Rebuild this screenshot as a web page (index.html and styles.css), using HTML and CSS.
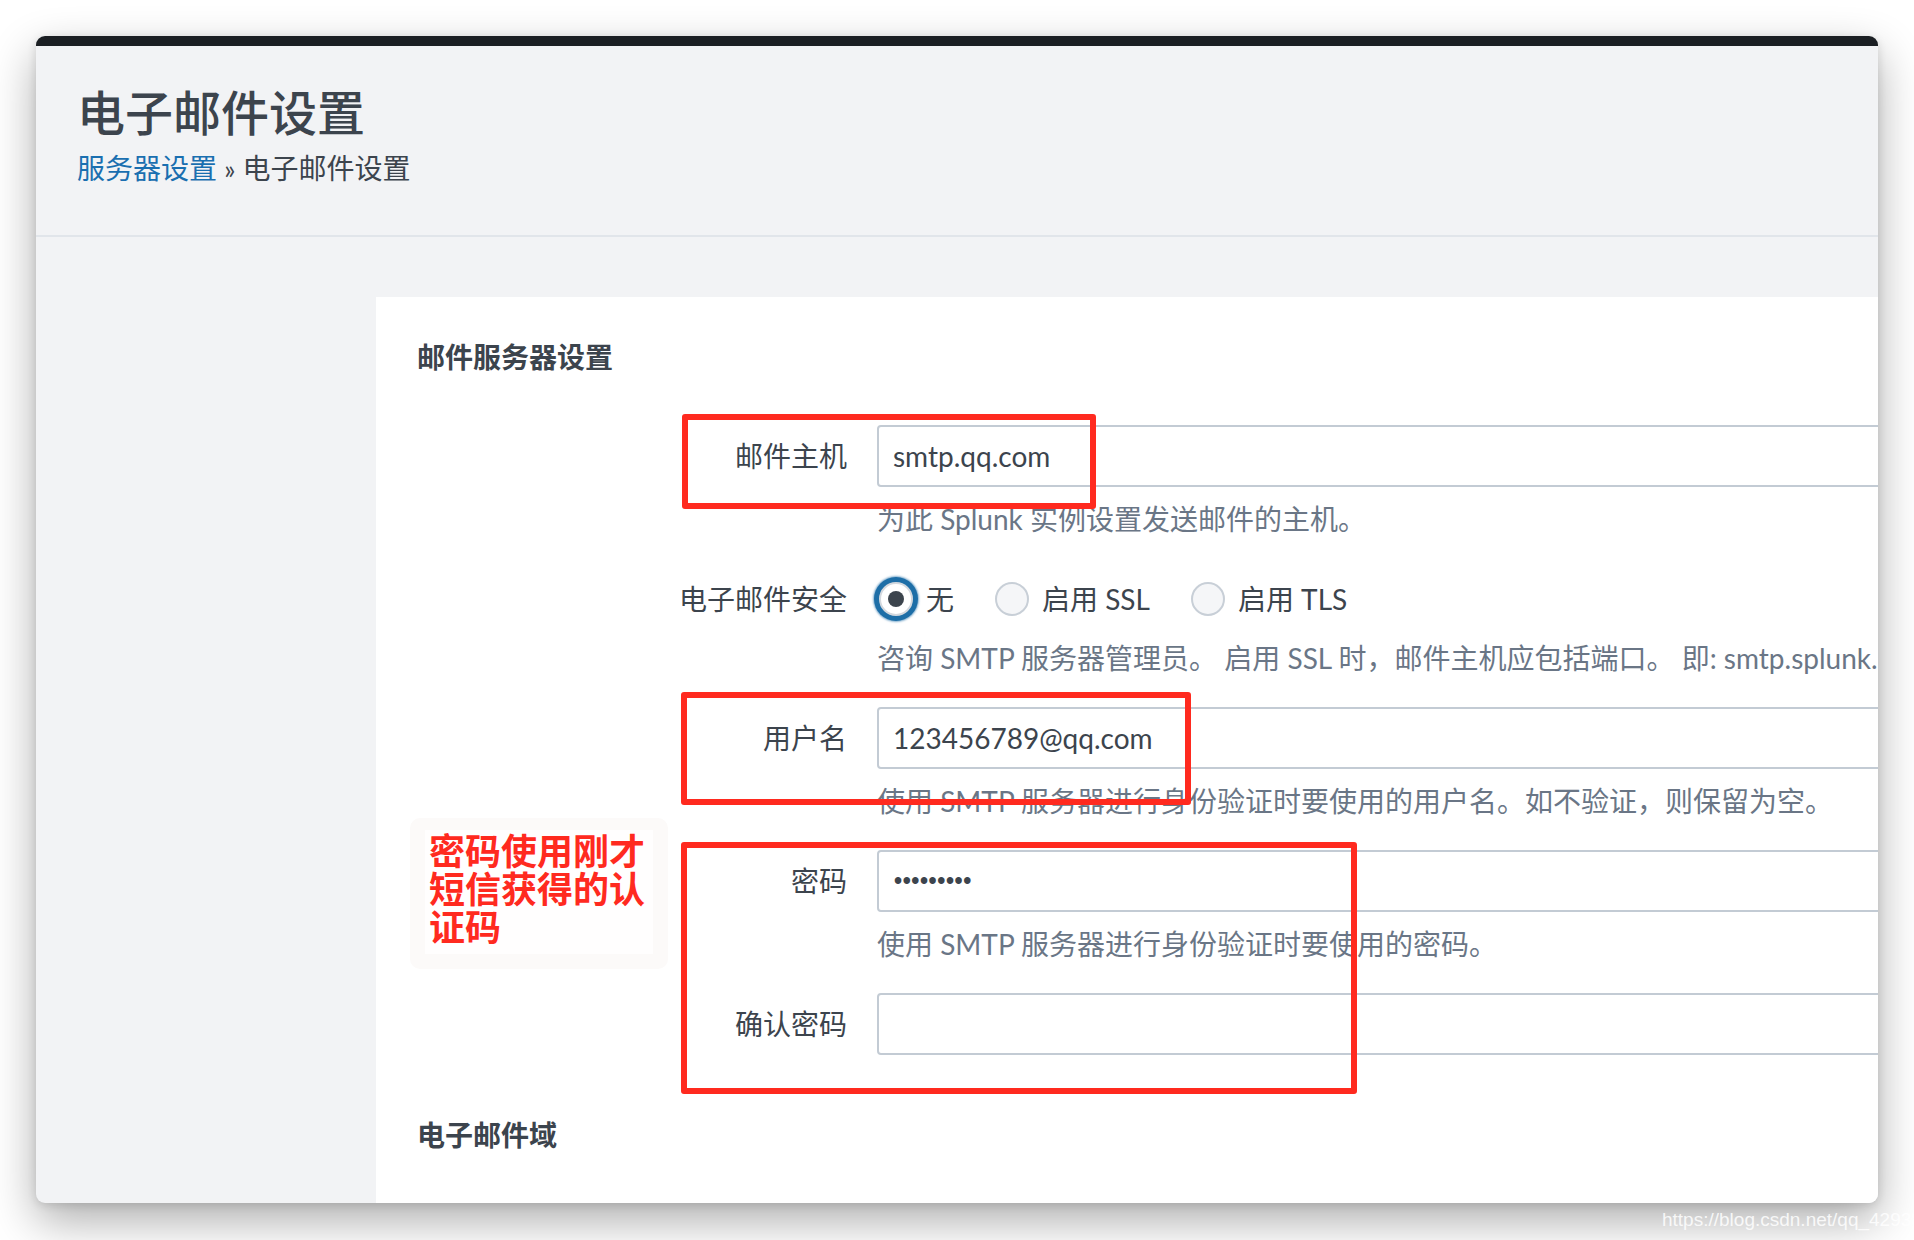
FILE: index.html
```html
<!DOCTYPE html>
<html lang="zh-CN">
<head>
<meta charset="utf-8">
<title>电子邮件设置</title>
<link rel="stylesheet" href="styles.css">
</head>
<body>
<div class="stage">
  <div class="window">
    <div class="titlebar"></div>
    <header class="page-header">
      <h1 class="page-title">电子邮件设置</h1>
      <nav class="breadcrumb"><a href="#" class="crumb-link">服务器设置</a> <span class="crumb-sep">»</span> <span>电子邮件设置</span></nav>
    </header>
    <main class="main">
      <section class="panel">
        <h2 class="section-title">邮件服务器设置</h2>
        <div class="form">
          <div class="field">
            <label class="field-label">邮件主机</label>
            <div class="field-control">
              <input class="text-input" type="text" value="smtp.qq.com">
              <p class="help">为此 Splunk 实例设置发送邮件的主机。</p>
            </div>
          </div>
          <div class="field">
            <label class="field-label">电子邮件安全</label>
            <div class="field-control">
              <div class="radio-group">
                <span class="radio"><span class="radio-dot checked"></span>无</span>
                <span class="radio"><span class="radio-dot"></span>启用 SSL</span>
                <span class="radio"><span class="radio-dot"></span>启用 TLS</span>
              </div>
              <p class="help help-tight">咨询 SMTP 服务器管理员。 启用 SSL 时，邮件主机应包括端口。 即: smtp.splunk.com:465</p>
            </div>
          </div>
          <div class="field">
            <label class="field-label">用户名</label>
            <div class="field-control">
              <input class="text-input" type="text" value="123456789@qq.com">
              <p class="help">使用 SMTP 服务器进行身份验证时要使用的用户名。如不验证，则保留为空。</p>
            </div>
          </div>
          <div class="field">
            <label class="field-label">密码</label>
            <div class="field-control">
              <div class="text-input password">•••••••••</div>
              <p class="help">使用 SMTP 服务器进行身份验证时要使用的密码。</p>
            </div>
          </div>
          <div class="field">
            <label class="field-label">确认密码</label>
            <div class="field-control">
              <input class="text-input" type="password" value="">
            </div>
          </div>
        </div>
        <h2 class="section-title section-second">电子邮件域</h2>
        <div class="form">
          <div class="field">
            <label class="field-label"></label>
            <div class="field-control">
              <input class="text-input" type="text" value="">
            </div>
          </div>
        </div>

        <div class="mark mark-host"></div>
        <div class="mark mark-user"></div>
        <div class="mark mark-pass"></div>
        <div class="note"><div class="note-inner">密码使用刚才<br>短信获得的认<br>证码</div></div>
      </section>
    </main>
  </div>
  <div class="watermark">https://blog.csdn.net/qq_42938491</div>
</div>
</body>
</html>
```

FILE: styles.css
```css
* { box-sizing: border-box; }

html, body {
  margin: 0;
  padding: 0;
  background: #ffffff;
}

body {
  width: 1914px;
  height: 1240px;
  overflow: hidden;
  font-family: Lato, "Noto Sans CJK SC", sans-serif;
  color: #3c444d;
}

.stage {
  position: relative;
  padding: 36px 36px 0 36px;
  height: 1240px;
}

.window {
  height: 1167px;
  border-radius: 9px;
  overflow: hidden;
  background: #f2f3f5;
  display: flex;
  flex-direction: column;
  box-shadow: 0 18px 46px rgba(0, 0, 0, 0.32), 0 2px 10px rgba(0, 0, 0, 0.12);
}

.titlebar {
  height: 10px;
  flex: none;
  background: #1b1f23;
}

.page-header {
  flex: none;
  padding: 39px 41px 48px 41px;
  border-bottom: 2px solid #e1e5ea;
}

.page-title {
  margin: 0;
  font-size: 48px;
  line-height: 56px;
  font-weight: 500;
  color: #3c444d;
}

.breadcrumb {
  margin-top: 9px;
  font-size: 28px;
  line-height: 36px;
  color: #3c444d;
}

.crumb-link {
  color: #1a6fb0;
  text-decoration: none;
}

.crumb-sep {
  font-size: 26px;
}

.main {
  flex: 1;
  display: flex;
  padding: 60px 0 0 340px;
  min-height: 0;
}

.panel {
  position: relative;
  flex: 1;
  background: #ffffff;
  padding: 40px 0 0 41px;
}

.section-title {
  margin: 0;
  font-size: 28px;
  line-height: 40px;
  font-weight: 700;
  color: #3c444d;
}

.section-second {
  margin-top: 60px;
}

.form {
  margin-top: 48px;
  margin-left: 260px;
}

.field {
  display: grid;
  grid-template-columns: 170px 1fr;
  column-gap: 30px;
  margin-bottom: 29px;
}

.field-label {
  font-size: 28px;
  line-height: 62px;
  text-align: right;
  color: #3c444d;
  white-space: nowrap;
}

.field-control {
  min-width: 0;
}

.text-input {
  display: block;
  width: calc(100% + 12px);
  height: 62px;
  margin: 0;
  border: 2px solid #c3cbd4;
  border-radius: 4px;
  padding: 0 14px;
  background: #ffffff;
  font-family: Lato, "Noto Sans CJK SC", sans-serif;
  font-size: 28px;
  color: #3c444d;
  outline: none;
}

.password {
  display: flex;
  align-items: center;
  font-size: 23px;
  letter-spacing: 0.6px;
  padding-left: 15px;
  font-family: "Liberation Sans", sans-serif;
  font-weight: 700;
}

.help {
  margin: 12px 0 0 0;
  font-size: 28px;
  line-height: 40px;
  color: #6a7686;
  white-space: nowrap;
}

.help-tight {
  margin-top: 8px;
}

.radio-group {
  display: flex;
  align-items: center;
  gap: 41px;
  height: 62px;
  padding-left: 2px;
}

.radio {
  display: flex;
  align-items: center;
  gap: 13px;
  font-size: 28px;
  line-height: 40px;
  color: #3c444d;
}

.radio-dot {
  position: relative;
  width: 34px;
  height: 34px;
  border-radius: 50%;
  border: 2px solid #c8cfd7;
  background: #f5f6f8;
  flex: none;
}

.radio-dot.checked {
  background: #ffffff;
  border-color: #d3d8de;
  box-shadow: 0 0 0 5px #1d6ea7, 0 0 2px 6px rgba(29, 110, 167, 0.55);
}

.radio-dot.checked::after {
  content: "";
  position: absolute;
  left: 7px;
  top: 7px;
  width: 16px;
  height: 16px;
  border-radius: 50%;
  background: #3c444d;
}

.mark {
  position: absolute;
  border: 6px solid #ff2a1f;
  border-radius: 3px;
  pointer-events: none;
}

.mark-host { left: 306px; top: 117px; width: 414px; height: 95px; }
.mark-user { left: 305px; top: 395px; width: 510px; height: 113px; }
.mark-pass { left: 305px; top: 545px; width: 676px; height: 252px; }

.note {
  position: absolute;
  left: 34px;
  top: 521px;
  width: 258px;
  height: 151px;
  padding: 12px 15px 15px 15px;
  background: #fcfaf9;
  border-radius: 10px;
}

.note-inner {
  background: #fffefe;
  height: 100%;
  padding-left: 4px;
  font-size: 36px;
  line-height: 38px;
  font-weight: 700;
  color: #ff2a1f;
  font-family: "Noto Sans CJK SC", sans-serif;
}

.watermark {
  position: absolute;
  left: 1662px;
  top: 1207px;
  font-family: "Liberation Sans", sans-serif;
  font-size: 19px;
  line-height: 26px;
  color: rgba(255, 255, 255, 0.85);
  white-space: nowrap;
}
```
